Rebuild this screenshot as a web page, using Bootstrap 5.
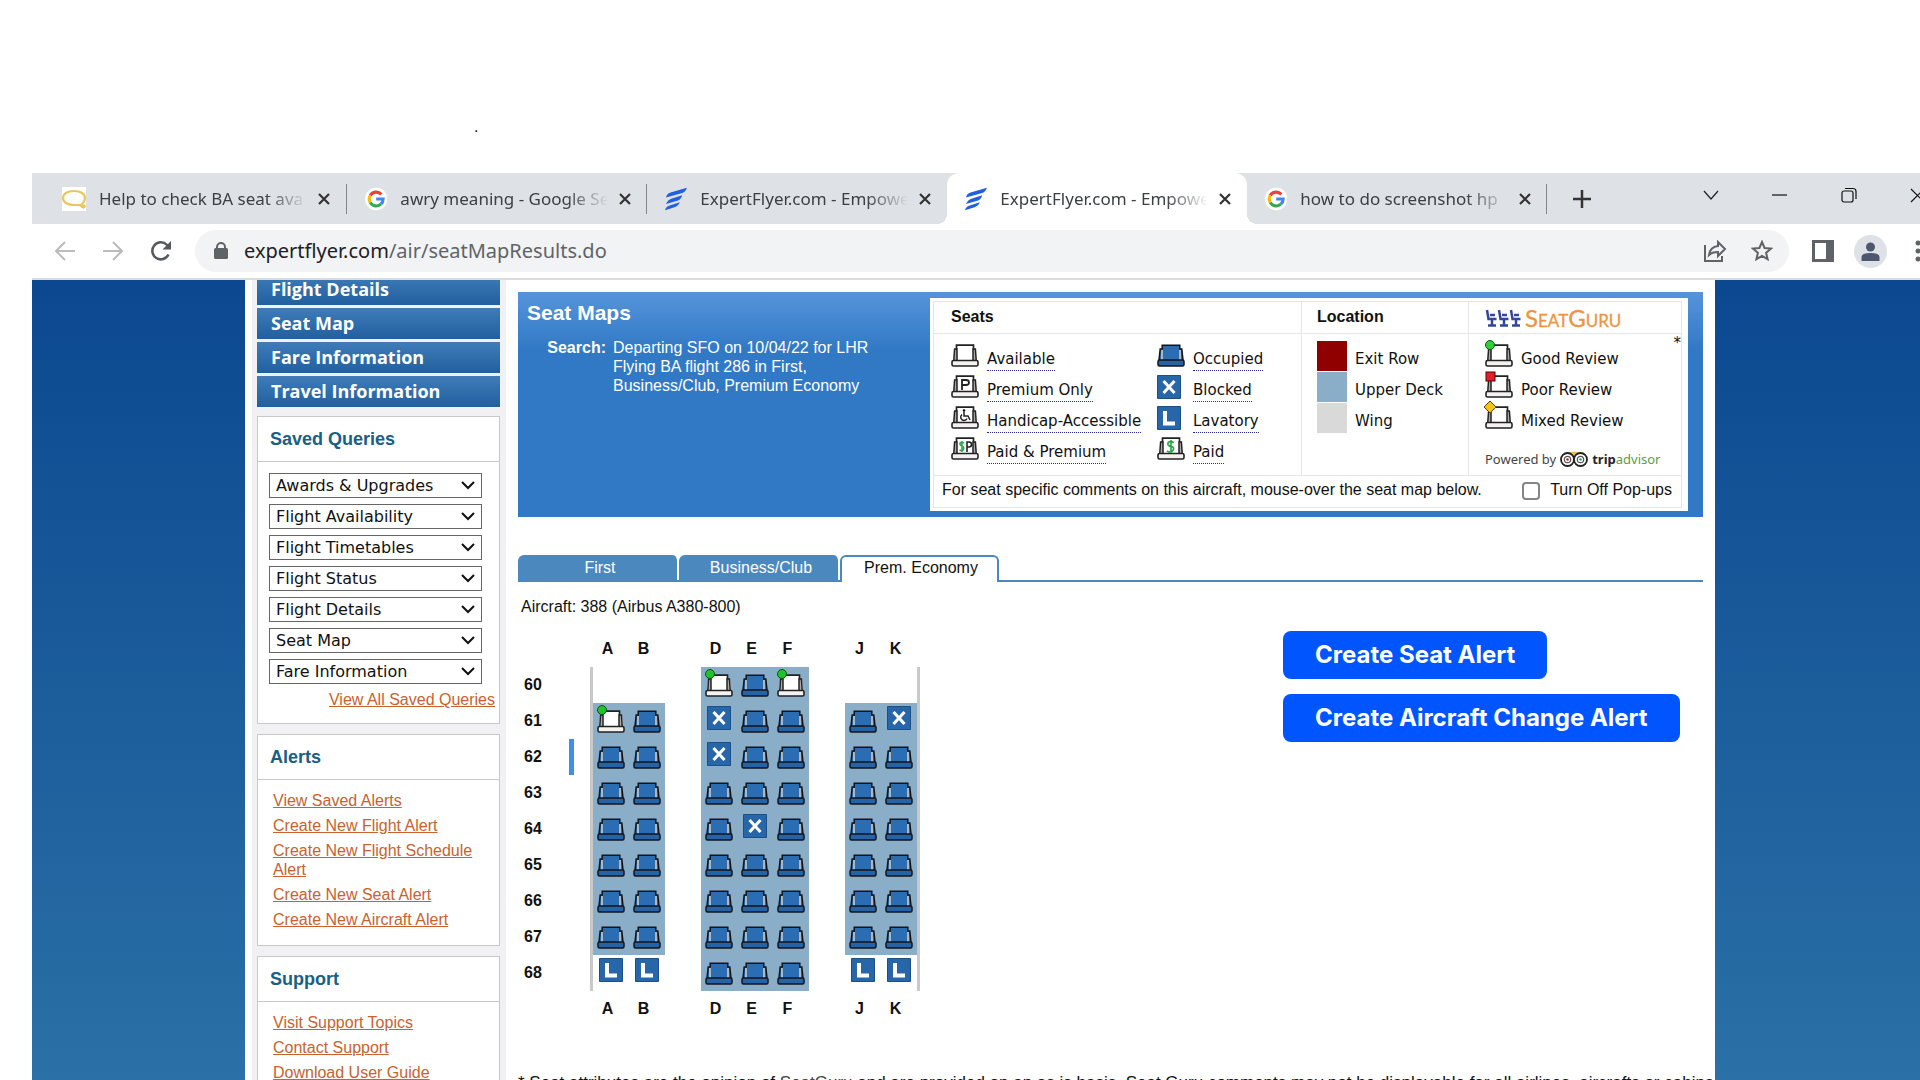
<!DOCTYPE html>
<html lang="en">
<head>
<meta charset="utf-8">
<meta name="viewport" content="width=device-width, initial-scale=1">
<title>ExpertFlyer.com - Seat Maps</title>
<link href="https://cdn.jsdelivr.net/npm/bootstrap@5.3.0/dist/css/bootstrap.min.css" rel="stylesheet">
<style>
body{font-family:"Liberation Sans",Arial,sans-serif;font-size:16px;line-height:19px;color:#111;background:#fff;height:100vh;overflow:hidden}
button{font:inherit}
.plain-btn{border:0;background:none;padding:0;display:flex;align-items:center;justify-content:center;color:inherit}
.top-blank{height:173px;flex:none}
.top-blank span{position:absolute;left:474px;top:117px}
.window{margin-left:32px;min-height:0}
/* browser tabs */
.tabstrip{background:#dee1e6;height:51px;flex:none;font-family:"Noto Sans",sans-serif;font-size:17px;color:#3c4043}
.btab{width:300px;flex:none;padding:0 13px 0 18px;position:relative}
.btab.first{width:315px;padding-left:30px}
.btab .ttl{width:208px;margin-left:13px;flex:none;overflow:hidden;white-space:nowrap;line-height:28px;-webkit-mask-image:linear-gradient(90deg,#000 80%,transparent)}
.btab .x{margin-left:7px;width:20px}
.btab.sep::after{content:"";position:absolute;right:0;top:11px;height:30px;width:1px;background:#80868b}
.btab.active{background:#fff;border-radius:12px 12px 0 0}
.btab.active::before,.btab.active::after{content:"";position:absolute;bottom:0;width:10px;height:10px}
.btab.active::before{left:-10px;background:radial-gradient(circle at 0 0,transparent 10px,#fff 10px)}
.btab.active::after{right:-10px;background:radial-gradient(circle at 100% 0,transparent 10px,#fff 10px)}
.new-tab{padding:0 26px}
.win-ctl{margin-left:auto;width:244px;flex:none;height:44px;overflow:hidden}
.win-ctl button{width:69px;flex:none}
.toolbar{height:56px;flex:none;border-bottom:2px solid #dadcde;overflow:hidden;color:#5f6368}
.nav-set{width:163px;padding-left:9px;flex:none}
.nav-ctl{width:48px;flex:none}
.omnibox{background:#f1f3f4;border-radius:21px;height:42px;flex:1;min-width:0;padding:0 16px 0 19px}
.url{font-family:"Noto Sans",sans-serif;font-size:20px;line-height:30px;color:#5f6368;white-space:nowrap}
.url b{font-weight:400;color:#202124}
.tool-end{width:131px;flex:none;padding-left:23px}
/* site */
.site{background:linear-gradient(#0b4890,#2b70a6 800px);padding:0 205px 0 213px;min-height:0;overflow:hidden}
.paper{background:#fff;padding:0 12px 0 7px;height:100%}
.side{width:254px;flex:none;background:#f1f1f3;padding:0 6px 0 5px}
.side-nav{margin-top:-6px}
.side-nav a{display:block;height:31px;margin-bottom:3px;padding-left:14px;background:linear-gradient(#3f7cb8,#215f9f);color:#fff;font:700 18px/30px "Trebuchet MS","Open Sans",sans-serif;text-decoration:none}
.box{background:#fff;border:1px solid #c9c9c9;margin-top:10px}
.box.b1{margin-top:9px}
.box h2{font-size:18px;line-height:44px;font-weight:700;color:#176087;margin:0;padding-left:12px;border-bottom:1px solid #c9c9c9}
.box a{color:#c8622f;text-decoration:underline}
.picks{padding-top:11px}
.view-all{padding:0 4px 14px 0;text-align:right}
.box select{display:block;width:213px;height:25px;margin:0 0 6px 11px;border:1px solid #666;border-radius:0;padding:0 0 0 6px;font:16px/22px Verdana,"DejaVu Sans",sans-serif;color:#111;appearance:none;background:#fff url("data:image/svg+xml,%3Csvg xmlns='http://www.w3.org/2000/svg' width='14' height='9'%3E%3Cpath d='M1 1l6 6 6-6' fill='none' stroke='%23111' stroke-width='2'/%3E%3C/svg%3E") no-repeat right 6px center}
.box ul{list-style:none;margin:0;padding:11px 10px 10px 15px}
.box li{margin-bottom:6px}
.main{flex:1;min-width:0;margin-left:12px;padding-top:12px}
.hero{background:linear-gradient(#5694da,#3179c5 58px);padding:6px 15px 6px 9px;color:#fff}
.hero h1{font-size:21px;font-weight:700;line-height:24px;margin:3px 0 13px}
.hero dt{width:79px;text-align:right;margin-right:7px}
.hero dd{width:280px;margin:0}
.legend-card{background:#fff;width:758px;flex:none;padding:3px 6px 3px 3px;color:#111}
.inner{border:1px solid #e6e6e6}
.inner h3{font-size:16px;font-weight:700;line-height:29px;height:32px;margin:0;border-bottom:1px solid #e6e6e6}
.lcol{border-right:1px solid #e6e6e6;height:173px;font-family:Verdana,"DejaVu Sans",sans-serif;font-size:15px}
.lcol:last-child{border-right:0}
.lcol h3{font-family:"Liberation Sans",Arial,sans-serif}
.col-seats{width:368px}.col-seats h3{padding-left:17px}
.col-seats .keys{padding:6px 0 0 17px}
#legA{width:206px}
.col-loc{width:167px}.col-loc h3,.col-loc .keys{padding-left:15px}
.col-loc .keys,.col-rev .keys{padding-top:6px}
.col-rev h3,.col-rev .keys{padding-left:16px}
.lrow{height:31px;display:flex;align-items:center;white-space:nowrap}
.lrow svg{flex:none;margin-right:8px}
.lrow abbr{text-decoration:none;border-bottom:1px dotted #2b2b90;line-height:21px;cursor:default;margin-top:9px}
.lrow em{font-style:normal;line-height:21px;margin-top:8px}
.swatch{width:30px;height:30px;margin-right:8px}
.s-exit{background:#900000}.s-upper{background:#8aadc8}.s-wing{background:#d9d9d9}
.sguru{font-family:Lato,sans-serif;font-size:24px;font-variant:small-caps;color:#ee9440;font-weight:400;-webkit-text-stroke:.3px #ee9440}
.powered{font:13px/18px "Noto Sans",sans-serif;color:#444;white-space:nowrap;padding-top:17px}
.foot-row{border-top:1px solid #e6e6e6;height:32px;padding:0 9px 4px 8px}
.foot-row input{width:18px;height:18px;margin:2px 10px 0 0;appearance:none;border:2px solid #858585;border-radius:4px;background:#fff}
.cabins{margin-top:38px;height:27px;border-bottom:2px solid #4b88be}
.cabins a{width:161px;border-right:2px solid #fff;height:25px;line-height:25px;padding-left:5px;background:#4b88be;color:#fff;text-align:center;border-radius:6px 6px 0 0;text-decoration:none}
.cabins a.on{width:159px;height:27px;background:#fff;color:#111;padding:0 0 0 3px;border:2px solid #4b88be;border-bottom:0;line-height:22px}
.aircraft{padding:15px 0 0 3px}
.map{margin-top:15px}
.map td,.map th{width:36px;height:36px;padding:0;line-height:20px}
.map thead th,.map tfoot th{text-align:center;padding-right:7px}
.map th.rowno{width:72px;text-align:left;padding:0 16px 0 6px}
.map th.wall-gap{width:3px;padding:0}
.exit-mark{width:5px;height:36px;background:#3f8ee8;display:block}
.map .wall{width:3px;background:#c9c9c9}
.map .deck{background:#8aadc8}
.map td svg{display:block;margin:0 auto}
.map td svg.sq{margin:-6px 6px 0}
.actions{margin-right:24px;width:396px;padding-top:49px}
.actions button{border:0;border-radius:8px;background:#0055ff;color:#fff;height:48px;padding:0 32px 1px;font:700 24px/45px Inter,sans-serif;white-space:nowrap;margin-bottom:15px}
.foot-note{margin:46px 0 0;font-size:17px;white-space:nowrap}
.foot-note a{color:#444;text-decoration:none}
</style>
</head>
<body class="d-flex flex-column">
<svg width="0" height="0" class="position-absolute" aria-hidden="true"><defs>
<symbol id="seat" viewBox="0 0 28 23" overflow="visible">
 <path d="M5 1h18v4h2l1 11.500H2L3 5h2z" fill="var(--c)"/>
 <path d="M5 16V6M23 16V6" stroke="#d8d0c4" stroke-width="1.500"/>
 <path d="M2 16 3.200 5h2V1.200h17.600V5h2L26 16" fill="none" stroke="#10151c" stroke-width="1.500"/>
 <rect x="1" y="16" width="26" height="6" rx="1.500" fill="var(--b)" stroke="#10151c" stroke-width="1.500"/>
</symbol>
<symbol id="empty" viewBox="0 0 28 23" overflow="visible">
 <path d="M2 16.500 3 5h2V1h18v4h2l1 11.500z" fill="#fff"/>
 <path d="M2.800 16 3.600 5H6v11M25.200 16 24.400 5H22v11" fill="#aaa" stroke="#222" stroke-width="1.500"/>
 <path d="M5.500 5V1.200h17V5" fill="none" stroke="#222" stroke-width="1.700"/>
 <rect x="1" y="16.500" width="26" height="5.500" rx="1.500" fill="#f4f2f0" stroke="#222" stroke-width="1.600"/>
</symbol>
<symbol id="goog" viewBox="0 0 24 24"><circle cx="12" cy="12" r="12" fill="#fff"/><g fill="none" stroke-width="3.300"><path d="M17.500 7A7.500 7.500 0 0 0 5.600 8.200" stroke="#ea4335"/><path d="M5.600 8.200a7.500 7.500 0 0 0 0 7.600" stroke="#fbbc05"/><path d="M5.600 15.800A7.500 7.500 0 0 0 17 17.600" stroke="#34a853"/><path d="M17 17.600A7.500 7.500 0 0 0 19.500 12H12" stroke="#4285f4"/></g></symbol>
<symbol id="ef" viewBox="0 0 24 24"><path fill="#1f5fe0" d="M1 10.500Q2 6 6 5L23.500 0Q22 4.500 18.500 5.500zM1 17.500Q3 13 6 12L18.500 8Q17 12.500 14 13.500zM0 24Q1 20 5 19L16 15.500Q14.500 19.500 11 20.500z"/></symbol>
<symbol id="cross" viewBox="0 0 12 12"><path d="M1 1l10 10M11 1 1 11" stroke="#333" stroke-width="2.200"/></symbol>
</defs></svg>

<div class="top-blank"><span>.</span></div>
<div class="window d-flex flex-column flex-grow-1">
 <div class="tabstrip d-flex overflow-hidden">
  <div class="btab first sep d-flex align-items-center"><svg width="24" height="24" viewBox="0 0 24 24"><path fill="#fff" d="M0 0h24v24H0z"/><path d="M20 19q4 2 2-1M12 4C5 4 1 7 1 11s4 7 11 7h6l4 3-2-4c2-2 3-3 3-6 0-4-4-7-11-7z" fill="none" stroke="#ebc75a" stroke-width="2.200"/></svg><span class="ttl">Help to check BA seat ava</span><button class="plain-btn x" aria-label="Close"><svg width="12" height="12"><use href="#cross"/></svg></button></div>
  <div class="btab sep d-flex align-items-center"><svg width="24" height="24"><use href="#goog"/></svg><span class="ttl">awry meaning - Google Se</span><button class="plain-btn x" aria-label="Close"><svg width="12" height="12"><use href="#cross"/></svg></button></div>
  <div class="btab d-flex align-items-center"><svg width="24" height="24"><use href="#ef"/></svg><span class="ttl">ExpertFlyer.com - Empowe</span><button class="plain-btn x" aria-label="Close"><svg width="12" height="12"><use href="#cross"/></svg></button></div>
  <div class="btab active d-flex align-items-center"><svg width="24" height="24"><use href="#ef"/></svg><span class="ttl">ExpertFlyer.com - Empowe</span><button class="plain-btn x" aria-label="Close"><svg width="12" height="12"><use href="#cross"/></svg></button></div>
  <div class="btab sep d-flex align-items-center"><svg width="24" height="24"><use href="#goog"/></svg><span class="ttl">how to do screenshot hp</span><button class="plain-btn x" aria-label="Close"><svg width="12" height="12"><use href="#cross"/></svg></button></div>
  <button class="plain-btn new-tab" aria-label="New tab"><svg width="18" height="18"><path d="M9 0v18M0 9h18" stroke="#333" stroke-width="2.500"/></svg></button>
  <div class="win-ctl d-flex">
   <button class="plain-btn" aria-label="Search tabs"><svg width="16" height="10"><path d="M1 1l7 8 7-8" fill="none" stroke="#222" stroke-width="1.200"/></svg></button>
   <button class="plain-btn" aria-label="Minimize"><svg width="15" height="2"><path d="M0 1h15" stroke="#111" stroke-width="1.200"/></svg></button>
   <button class="plain-btn" aria-label="Restore"><svg width="16" height="16" fill="none" stroke="#111" stroke-width="1.200"><rect x="1" y="4" width="11" height="11" rx="2"/><path d="M4 1.500h8q3 0 3 3v7.500"/></svg></button>
   <button class="plain-btn" aria-label="Close window"><svg width="15" height="15"><path d="M1 1l13 13M14 1 1 14" stroke="#111" stroke-width="1.200"/></svg></button>
  </div>
 </div>
 <div class="toolbar d-flex align-items-center">
  <div class="nav-set d-flex">
   <button class="plain-btn nav-ctl" aria-label="Back"><svg width="20" height="20" fill="none" stroke="#bbb" stroke-width="2"><path d="M20 10H1M10 1 1 10l9 9"/></svg></button>
   <button class="plain-btn nav-ctl" aria-label="Forward"><svg width="20" height="20" fill="none" stroke="#bbb" stroke-width="2"><path d="M0 10h19M10 1l9 9-9 9"/></svg></button>
   <button class="plain-btn nav-ctl" aria-label="Reload"><svg width="22" height="22" fill="none" stroke="#55585c" stroke-width="2.500"><path d="M18.500 14.500a8.500 8.500 0 1 1-1.500-9.500l3 3"/><path d="M21 1v8.500h-8.500z" fill="#55585c" stroke="none"/></svg></button>
  </div>
  <div class="omnibox d-flex align-items-center">
   <svg width="14" height="18" fill="#5f6368"><rect x="0" y="6" width="14" height="11" rx="1.500"/><path d="M3 7V5a4 4 0 0 1 8 0v2" fill="none" stroke="#5f6368" stroke-width="2"/></svg>
   <span class="url ms-3"><b>expertflyer.com</b>/air/seatMapResults.do</span>
   <button class="plain-btn ms-auto me-4" aria-label="Share"><svg width="23" height="22" fill="none" stroke="#5f6368" stroke-width="2"><path d="M1 5v16h17v-5M5 15q1-8 9-9V2l7 7-7 7v-4q-6 0-9 3z"/></svg></button>
   <button class="plain-btn" aria-label="Bookmark"><svg width="22" height="22" viewBox="0 0 22 22" fill="none" stroke="#5f6368" stroke-width="2"><path d="M11 2l2.600 6 6.400.6-4.900 4.200 1.500 6.300L11 15.800l-5.600 3.300 1.500-6.300L2 8.600 8.400 8z"/></svg></button>
  </div>
  <div class="tool-end d-flex align-items-center">
   <button class="plain-btn" aria-label="Side panel"><svg width="22" height="22"><path d="M0 0h22v22H0z" fill="#5f6368"/><path d="M3 3h11v16H3z" fill="#fff"/></svg></button>
   <button class="plain-btn ms-3 ps-1" aria-label="Profile"><svg width="33" height="33"><circle cx="16.500" cy="16.500" r="16.500" fill="#dee1e6"/><circle cx="16.500" cy="12" r="4.500" fill="#4d5870"/><path d="M7.500 26v-4q0-4 9-4t9 4v4z" fill="#4d5870"/></svg></button>
   <button class="plain-btn ms-4 ps-1" aria-label="Menu"><svg width="6" height="22" fill="#5f6368"><circle cx="3" cy="3" r="2.500"/><circle cx="3" cy="11" r="2.500"/><circle cx="3" cy="19" r="2.500"/></svg></button>
  </div>
 </div>

 <div class="site flex-grow-1">
  <div class="paper d-flex">
   <aside class="side">
    <nav class="side-nav"><a href="#">Flight Details</a><a href="#">Seat Map</a><a href="#">Fare Information</a><a href="#">Travel Information</a></nav>
    <section class="box b1"><h2>Saved Queries</h2>
     <div class="picks">
      <select aria-label="Awards and upgrades"><option>Awards &amp; Upgrades</option></select>
      <select aria-label="Flight availability"><option>Flight Availability</option></select>
      <select aria-label="Flight timetables"><option>Flight Timetables</option></select>
      <select aria-label="Flight status"><option>Flight Status</option></select>
      <select aria-label="Flight details"><option>Flight Details</option></select>
      <select aria-label="Seat map"><option>Seat Map</option></select>
      <select aria-label="Fare information"><option>Fare Information</option></select></div>
     <div class="view-all"><a href="#">View All Saved Queries</a></div>
    </section>
    <section class="box"><h2>Alerts</h2><ul><li><a href="#">View Saved Alerts</a></li><li><a href="#">Create New Flight Alert</a></li><li><a href="#">Create New Flight Schedule Alert</a></li><li><a href="#">Create New Seat Alert</a></li><li><a href="#">Create New Aircraft Alert</a></li></ul></section>
    <section class="box"><h2>Support</h2><ul><li><a href="#">Visit Support Topics</a></li><li><a href="#">Contact Support</a></li><li><a href="#">Download User Guide</a></li></ul></section>
   </aside>

   <main class="main">
    <section class="hero d-flex justify-content-between">
     <div><h1>Seat Maps</h1><dl class="d-flex m-0"><dt>Search:</dt><dd>Departing SFO on 10/04/22 for LHR<br>Flying BA flight 286 in First,<br>Business/Club, Premium Economy</dd></dl></div>
     <div class="legend-card"><div class="inner">
      <div class="d-flex">
       <div class="lcol col-seats"><h3>Seats</h3>
        <div class="keys d-flex"><div id="legA"></div><div id="legB"></div></div></div>
       <div class="lcol col-loc"><h3>Location</h3>
        <div class="keys">
         <div class="lrow"><span class="swatch s-exit"></span><em>Exit Row</em></div>
         <div class="lrow"><span class="swatch s-upper"></span><em>Upper Deck</em></div>
         <div class="lrow"><span class="swatch s-wing"></span><em>Wing</em></div>
        </div></div>
       <div class="lcol col-rev flex-grow-1 position-relative"><h3 class="d-flex align-items-center"><svg width="36" height="18" viewBox="0 0 36 18" fill="none" stroke="#34459b" stroke-width="2.500"><path d="M2 1l1.500 9h8M7 10v6M3 16.500h8M5 6h5M14 1l1.500 9h8M19 10v6M15 16.500h8M17 6h5M26 1l1.500 9h8M31 10v6M27 16.500h8M29 6h5"/></svg><span class="sguru ms-1">SeatGuru</span></h3>
        <span class="position-absolute end-0">*</span>
        <div class="keys">
         <div class="lrow"><svg width="28" height="23" overflow="visible"><use href="#empty"/><circle cx="5" cy="1" r="4.500" fill="#2fd03a" stroke="#14501a"/></svg><em>Good Review</em></div>
         <div class="lrow"><svg width="28" height="23" overflow="visible"><use href="#empty"/><rect x="1" y="-3" width="9" height="9" fill="#e0202c" stroke="#500"/></svg><em>Poor Review</em></div>
         <div class="lrow"><svg width="28" height="23" overflow="visible"><use href="#empty"/><path d="M5-5l6 6-6 6-6-6z" fill="#f4c414" stroke="#654400"/></svg><em>Mixed Review</em></div>
         <div class="powered d-flex align-items-center"><span>Powered by</span><svg class="mx-1" width="28" height="16" viewBox="0 0 28 16"><path d="M6 2q8-3 16 0l-8 8z" fill="#e8bf55"/><g fill="#fff" stroke="#222" stroke-width="1.800"><circle cx="7.500" cy="8.500" r="6.500"/><circle cx="20.500" cy="8.500" r="6.500"/></g><g fill="none" stroke="#555" stroke-width="1.200"><circle cx="7.500" cy="8.500" r="3.200"/><circle cx="20.500" cy="8.500" r="3.200"/></g><circle cx="7.500" cy="8.500" r="1.300" fill="#c22"/><circle cx="20.500" cy="8.500" r="1.300" fill="#2a7"/></svg><b class="text-dark">trip</b><span style="color:#5c9c48">advisor</span></div>
        </div></div>
      </div>
      <div class="foot-row d-flex align-items-center justify-content-between"><span>For seat specific comments on this aircraft, mouse-over the seat map below.</span><span class="d-flex align-items-center"><input type="checkbox" id="pop"><label for="pop">Turn Off Pop-ups</label></span></div>
     </div></div>
    </section>
    <nav class="cabins d-flex"><a href="#">First</a><a href="#">Business/Club</a><a class="on" href="#">Prem. Economy</a></nav>
    <div class="d-flex justify-content-between">
     <div>
      <div class="aircraft">Aircraft: 388 (Airbus A380-800)</div>
      <table class="map" id="map"></table>
     </div>
     <div class="actions"><button>Create Seat Alert</button><button>Create Aircraft Change Alert</button></div>
    </div>
    <p class="foot-note">* Seat attributes are the opinion of <a href="#">SeatGuru</a> and are provided on an as is basis. Seat Guru comments may not be displayable for all airlines, aircrafts or cabins</p>
   </main>
  </div>
 </div>
</div>
<script>
const extra = {
 P:'<path d="M11 15V5h4q3 0 3 2.500T15 10h-4" fill="none" stroke="#222" stroke-width="1.800"/>',
 H:'<circle cx="13" cy="4.500" r="1.300"/><path d="M13 6v4h4l2 4M11 8.500a3.300 3.300 0 1 0 5 4" fill="none" stroke="#222" stroke-width="1.500"/>',
 D:'<path d="M17 5.500q-5-2-6 .5t3 3.300 2 4-6 .7M14 3v13" fill="none" stroke="#2ba84a" stroke-width="1.700"/>',
 M:'<path d="M13 6q-3.500-1.500-4 .3t2 2.700 1.500 3.300-4 .7M11 4v11" fill="none" stroke="#2ba84a" stroke-width="1.500"/><path d="M16 15V5h2q2.500 0 2.500 2.500T18 10h-2" fill="none" stroke="#222" stroke-width="1.600"/>'
};
const glyph = {
 o:'<svg width="28" height="23" style="--c:#2a6db2;--b:#2563a5"><use href="#seat"/></svg>',
 x:'<svg class="sq" width="24" height="24"><path d="M.5.500h23v23H.5z" fill="#2766a8" stroke="#1d4f87"/><path d="M6.500 6l11 12M17.500 6l-11 12" stroke="#fff" stroke-width="3"/></svg>',
 l:'<svg class="sq" width="24" height="24"><path d="M.5.500h23v23H.5z" fill="#2766a8" stroke="#1d4f87"/><path d="M8 5v12.500h10" fill="none" stroke="#fff" stroke-width="4"/></svg>',
 g:'<svg width="28" height="23" overflow="visible"><use href="#empty"/><circle cx="5" cy="0" r="4.500" fill="#1fc528" stroke="#14501a"/></svg>',
 a:'<svg width="28" height="23"><use href="#empty"/></svg>'
};
const seatWith = k => '<svg width="28" height="23"><use href="#empty"/>' + extra[k] + '</svg>';
const legend = (id, rows) => document.getElementById(id).innerHTML = rows.map(r => `<div class="lrow">${r[0]}<abbr>${r[1]}</abbr></div>`).join('');
legend('legA', [[glyph.a,'Available'],[seatWith('P'),'Premium Only'],[seatWith('H'),'Handicap-Accessible'],[seatWith('M'),'Paid &amp; Premium']]);
const wide = s => s.replace('width="24"', 'width="28"').replace('class="sq"', '');
legend('legB', [[glyph.o,'Occupied'],[wide(glyph.x),'Blocked'],[wide(glyph.l),'Lavatory'],[seatWith('D'),'Paid']]);
// one character per seat column, space = aisle, dot = no seat
const rows = {60:'.. gog ..',61:'go xoo ox',62:'oo xoo oo',63:'oo ooo oo',64:'oo oxo oo',65:'oo ooo oo',66:'oo ooo oo',67:'oo ooo oo',68:'ll ooo ll'};
const letters = '<tr><th class="rowno"></th><th class="wall-gap"></th>' + [...'AB DEF JK'].map(c => `<th>${c.trim()}</th>`).join('') + '</tr>';
document.getElementById('map').innerHTML = '<thead>' + letters + '</thead><tbody>' + Object.entries(rows).map(([n, s]) =>
 `<tr><th class="rowno"><span class="d-flex align-items-center justify-content-between">${n}${n === '62' ? '<i class="exit-mark"></i>' : ''}</span></th><td class="wall"></td>` +
 [...s].map(c => `<td class="${'gox'.includes(c) ? 'deck' : ''}">${glyph[c] || ''}</td>`).join('') + '<td class="wall"></td></tr>').join('') + '</tbody><tfoot>' + letters + '</tfoot>';
</script>
<script src="https://cdn.jsdelivr.net/npm/bootstrap@5.3.0/dist/js/bootstrap.bundle.min.js"></script>
</body>
</html>
